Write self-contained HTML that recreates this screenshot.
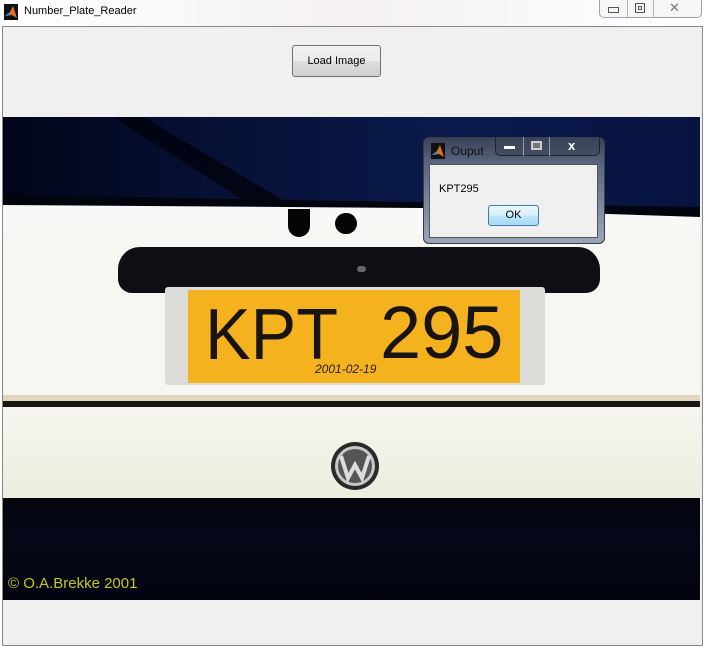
<!DOCTYPE html>
<html><head><meta charset="utf-8"><style>
*{margin:0;padding:0;box-sizing:border-box}
body{width:705px;height:646px;background:#fff;position:relative;overflow:hidden;font-family:"Liberation Sans",sans-serif}
.abs{position:absolute}
</style></head><body>
<div class="abs" style="left:0;top:0;width:705px;height:26px;background:linear-gradient(90deg,#fff 0%,#f4f0f4 50%,#fff 100%)"></div>
<svg class="abs" style="left:4px;top:4px" width="14" height="16" viewBox="0 0 14 16"><rect width="14" height="16" fill="#111"/><path d="M1 12 L6 8 L9 2 L13 14 L8 11 Z" fill="#e8701a"/><path d="M1 12 L6 8 L7 11 Z" fill="#3a8fd0"/></svg>
<div class="abs" style="left:24px;top:5px;font-size:11px;color:#000">Number_Plate_Reader</div>
<div class="abs" style="left:599px;top:0;width:103px;height:18px;border:1px solid #a0a0a8;border-top:none;border-radius:0 0 5px 5px;background:#f6f6f8"></div>
<div class="abs" style="left:627px;top:0;width:1px;height:18px;background:#b0b0b8"></div>
<div class="abs" style="left:653px;top:0;width:1px;height:18px;background:#b0b0b8"></div>
<div class="abs" style="left:608px;top:7px;width:11px;height:6px;border:1px solid #555"></div>
<div class="abs" style="left:635px;top:3px;width:10px;height:10px;border:1px solid #555"></div>
<div class="abs" style="left:638px;top:6px;width:4px;height:4px;border:1px solid #555"></div>
<div class="abs" style="left:669px;top:0px;font-size:13px;color:#777">✕</div>
<div class="abs" style="left:2px;top:26px;width:701px;height:620px;background:#f0f0f0;border:1px solid #888"></div>
<div class="abs" style="left:292px;top:45px;width:89px;height:32px;border:1px solid #707070;border-radius:3px;background:linear-gradient(#f2f2f2,#ebebeb 50%,#dddddd 51%,#cfcfcf);font-size:11px;text-align:center;line-height:30px;color:#000">Load Image</div>
<div class="abs" style="left:3px;top:117px;width:697px;height:483px;overflow:hidden;background:#f6f6f2">
 <div class="abs" style="left:0;top:0;width:697px;height:110px;background:linear-gradient(90deg,#02051a,#071238 35%,#0a1a4c 65%,#081440)"></div>
 <svg class="abs" style="left:0;top:0" width="697" height="140"><path d="M140 0 L300 95 L275 105 L110 0Z" fill="#01030e" opacity="0.85"/><path d="M0 78 L697 90 L697 108 L0 92Z" fill="#03050e"/></svg>
 <div class="abs" style="left:0;top:88px;width:697px;height:30px;background:#f8f8f6;clip-path:polygon(0 0,60% 10%,100% 40%,100% 100%,0 100%)"></div>
 <div class="abs" style="left:285px;top:92px;width:22px;height:28px;background:#050505;border-radius:0 0 11px 11px"></div>
 <div class="abs" style="left:332px;top:96px;width:22px;height:21px;background:#050505;border-radius:11px"></div>
 <div class="abs" style="left:115px;top:130px;width:482px;height:46px;background:#0d0f14;border-radius:22px 22px 14px 14px"></div>
 <div class="abs" style="left:354px;top:149px;width:9px;height:6px;background:#666;border-radius:3px"></div>
 <div class="abs" style="left:162px;top:170px;width:380px;height:98px;background:#dcdcd8;border-radius:3px"></div>
 <div class="abs" style="left:185px;top:173px;width:332px;height:93px;background:#f4b31e"></div>
 <div class="abs" style="left:202px;top:178px;font-size:72px;color:#1a1410;transform:scaleX(0.95);transform-origin:left;line-height:80px">KPT</div>
 <div class="abs" style="left:377px;top:176px;font-size:74px;color:#1a1410;line-height:80px">295</div>
 <div class="abs" style="left:312px;top:245px;font-size:12px;font-style:italic;color:#2a2010">2001-02-19</div>
 <div class="abs" style="left:0;top:278px;width:697px;height:6px;background:#d8c8a8;opacity:.7"></div>
 <div class="abs" style="left:0;top:284px;width:697px;height:6px;background:#1a1612"></div>
 <div class="abs" style="left:0;top:290px;width:697px;height:92px;background:linear-gradient(#f6f6f0,#ececde)"></div>
 <div class="abs" style="left:0;top:381px;width:697px;height:102px;background:linear-gradient(#04040e,#050818 40%,#030310)"></div>
 <svg class="abs" style="left:323px;top:323px" width="58" height="52" viewBox="0 0 58 52"><circle cx="29" cy="26" r="24" fill="#2a2a2a"/><circle cx="29" cy="26" r="20" fill="#c8c8c8"/><circle cx="29" cy="26" r="17" fill="#555"/><path d="M15 16 L22 38 L29 25 L36 38 L43 16" stroke="#ddd" stroke-width="4" fill="none"/></svg>
 <div class="abs" style="left:5px;top:458px;font-size:15px;color:#c8c81c">© O.A.Brekke 2001</div>
</div>
<div class="abs" style="left:423px;top:137px;width:182px;height:107px;border:1px solid #3a3a44;border-radius:6px;background:linear-gradient(#3a4256,#5a6680 25%,#9aa6b8)"></div>
<svg class="abs" style="left:430px;top:143px" width="16" height="16" viewBox="0 0 14 16"><rect width="14" height="16" fill="#111"/><path d="M1 12 L6 8 L9 2 L13 14 L8 11 Z" fill="#e8701a"/><path d="M1 12 L6 8 L7 11 Z" fill="#3a8fd0"/></svg>
<div class="abs" style="left:451px;top:144px;font-size:12px;color:#111">Ouput</div>
<div class="abs" style="left:495px;top:137px;width:105px;height:19px;border:1px solid #222;border-top:none;border-radius:0 0 5px 5px;background:rgba(60,70,90,.6)"></div>
<div class="abs" style="left:523px;top:137px;width:1px;height:19px;background:#999"></div>
<div class="abs" style="left:549px;top:137px;width:1px;height:19px;background:#999"></div>
<div class="abs" style="left:504px;top:146px;width:11px;height:3px;background:#fff"></div>
<div class="abs" style="left:531px;top:141px;width:11px;height:9px;border:2px solid #ccc;background:#777"></div>
<div class="abs" style="left:568px;top:138px;font-size:13px;font-weight:bold;color:#fff">x</div>
<div class="abs" style="left:429px;top:164px;width:169px;height:74px;background:#f0f0f0;border:1px solid #555"></div>
<div class="abs" style="left:439px;top:183px;font-size:11px;color:#000">KPT295</div>
<div class="abs" style="left:488px;top:205px;width:51px;height:21px;border:1px solid #3c7fb1;border-radius:3px;background:linear-gradient(#eaf6fd,#d9f0fc 50%,#bee6fd 51%,#a7d9f5);font-size:11px;text-align:center;line-height:19px;color:#000">OK</div>
</body></html>
